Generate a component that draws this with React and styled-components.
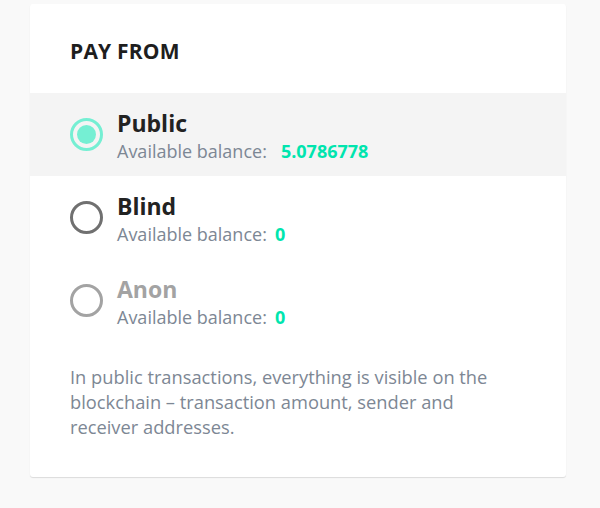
import styled, { createGlobalStyle } from 'styled-components'

const GlobalStyle = createGlobalStyle`
body {
  margin: 0;
  background: #f9f9f9;
  font-family: "Open Sans", "Liberation Sans", sans-serif;
}
`

const Page = styled.div`
  padding: 4px 34px 30px 30px;
`

const Card = styled.div`
  background: #fff;
  border-radius: 3px;
  box-shadow: 0 1px 1px rgba(0, 0, 0, 0.12);
  padding: 33px 0 38px;
`

const Heading = styled.h2`
  margin: 0 0 28px;
  padding: 0 40px;
  font-size: 21px;
  line-height: 28px;
  font-weight: 700;
  color: #1e1e1e;
  letter-spacing: 0.2px;
`

const Option = styled.label`
  display: flex;
  align-items: center;
  gap: 14px;
  height: 83px;
  padding: 0 40px;
  box-sizing: border-box;
  background: ${p => (p.selected ? '#f4f4f4' : 'transparent')};
  cursor: ${p => (p.disabled ? 'default' : 'pointer')};
`

const Radio = styled.span`
  width: 33px;
  height: 33px;
  box-sizing: border-box;
  border-radius: 50%;
  border: 3px solid ${p => p.color};
  display: flex;
  align-items: center;
  justify-content: center;
  flex-shrink: 0;
`

const Dot = styled.span`
  width: 19px;
  height: 19px;
  border-radius: 50%;
  background: #75efd3;
`

const Info = styled.div`
  display: flex;
  flex-direction: column;
  padding-top: 3px;
`

const Title = styled.div`
  font-size: 23px;
  line-height: 28px;
  font-weight: 700;
  color: ${p => (p.disabled ? '#a3a3a3' : '#222')};
`

const Balance = styled.div`
  margin-top: 2px;
  font-size: 18px;
  line-height: 24px;
  color: #7d8794;
`

const Amount = styled.span`
  font-weight: 700;
  color: #00e5ae;
  margin-left: ${p => (p.wide ? '14px' : '8px')};
`

const Note = styled.p`
  margin: 22px 0 0;
  padding: 0 60px 0 40px;
  font-size: 18.3px;
  line-height: 25px;
  color: #7d8794;
`

const options = [
  { name: 'Public', amount: '5.0786778', selected: true, ring: '#75efd3' },
  { name: 'Blind', amount: '0', ring: '#707070' },
  { name: 'Anon', amount: '0', ring: '#a3a3a3', disabled: true },
]

const App = () => {
  return (
    <Page>
      <GlobalStyle />
      <Card>
        <Heading>PAY FROM</Heading>
        {options.map(o => (
          <Option key={o.name} selected={o.selected} disabled={o.disabled}>
            <Radio color={o.ring}>{o.selected && <Dot />}</Radio>
            <Info>
              <Title disabled={o.disabled}>{o.name}</Title>
              <Balance>
                Available balance:
                <Amount wide={o.selected}>{o.amount}</Amount>
              </Balance>
            </Info>
          </Option>
        ))}
        <Note>
          In public transactions, everything is visible on the blockchain – transaction amount, sender and
          receiver addresses.
        </Note>
      </Card>
    </Page>
  )
}

export default App
